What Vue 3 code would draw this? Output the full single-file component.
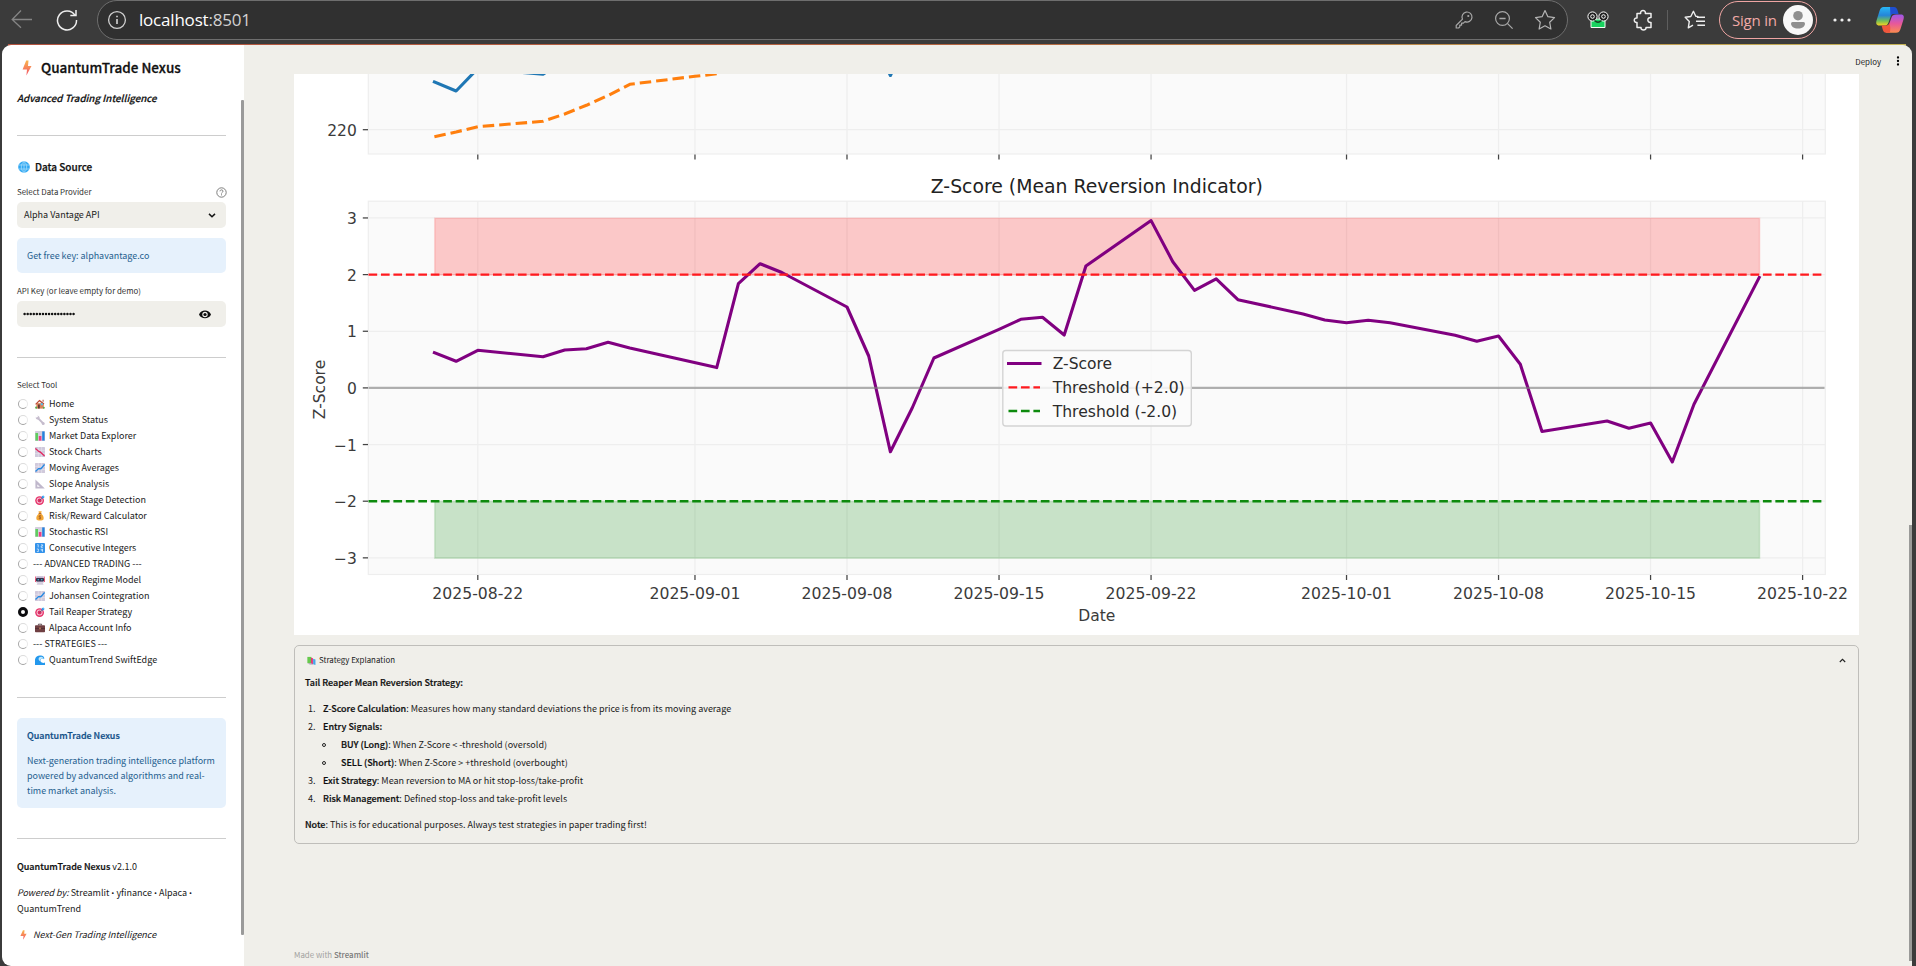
<script setup>
const tools = [
  { icon: 'house', label: 'Home' },
  { icon: 'wrench', label: 'System Status' },
  { icon: 'bars', label: 'Market Data Explorer' },
  { icon: 'down', label: 'Stock Charts' },
  { icon: 'up', label: 'Moving Averages' },
  { icon: 'ruler', label: 'Slope Analysis' },
  { icon: 'target', label: 'Market Stage Detection' },
  { icon: 'money', label: 'Risk/Reward Calculator' },
  { icon: 'bars', label: 'Stochastic RSI' },
  { icon: 'numbers', label: 'Consecutive Integers' },
  { label: '--- ADVANCED TRADING ---' },
  { icon: 'robot', label: 'Markov Regime Model' },
  { icon: 'up', label: 'Johansen Cointegration' },
  { icon: 'target', label: 'Tail Reaper Strategy', on: true },
  { icon: 'case', label: 'Alpaca Account Info' },
  { label: '--- STRATEGIES ---' },
  { icon: 'wave', label: 'QuantumTrend SwiftEdge' }
]

// Horizontal scale: day 0 is 2025-08-22.
const x = d => 477.8 + d * 21.718
const y = z => 387.9 - z * 56.65

const dates = [
  [0, '2025-08-22'], [10, '2025-09-01'], [17, '2025-09-08'], [24, '2025-09-15'],
  [31, '2025-09-22'], [40, '2025-10-01'], [47, '2025-10-08'], [54, '2025-10-15'], [61, '2025-10-22']
]
const levels = [3, 2, 1, 0, -1, -2, -3]

const series = [
  [-2, 352.7], [-1, 361.3], [0, 350.3], [3, 356.7], [4, 350], [5, 348.7], [6, 342.3], [7, 348],
  [11, 367.6], [12, 283.7], [13, 263.7], [14, 272.5], [17, 307], [18, 356], [19, 451.8], [20, 408],
  [21, 358], [24, 329.3], [25, 319.3], [26, 317.3], [27, 335], [28, 266], [31, 220.6], [32, 261.7],
  [33, 290.4], [34, 278.9], [35, 299.7], [38, 314], [39, 320], [40, 322.7], [41, 320.3], [42, 322.7],
  [45, 335.3], [46, 341.3], [47, 336], [48, 364.3], [49, 431.5], [52, 421], [53, 428.3], [54, 423],
  [55, 462], [56, 404.3], [59, 277.5]
]
const price = [[-2, 82], [-1, 91], [0, 68.5], [3, 74.3], [4, 60]]
const dip = [[18, 30], [19, 75.5], [20, 30]]
const average = [
  [-2, 136.7], [-1, 132], [0, 126.7], [3, 121.3], [4, 114], [5, 105.3], [6, 95.5], [7, 84.3],
  [10, 76.3], [11, 73.8], [12, 68]
]
const line = pts => pts.map(([d, v]) => `${x(d).toFixed(1)},${v}`).join(' ')
const bandX = x(-2)
const bandW = x(59) - x(-2)
const fmt = n => (n < 0 ? '\u2212' + -n : String(n))
</script>

<template>
  <div class="browser">
    <svg class="defs" width="0" height="0">
      <linearGradient id="boltg" x1="0" y1="0" x2="0" y2="1"><stop offset="0" stop-color="#f9b64b" /><stop offset="1" stop-color="#f4516a" /></linearGradient>
      <symbol id="bolt" viewBox="0 0 10 16"><path fill="url(#boltg)" d="M4.2.5H6.5L6 6H9.5L4.4 15.5 5 9.5H.6z" /></symbol>
      <symbol id="globe" viewBox="0 0 12 12"><circle cx="6" cy="6" r="5.8" fill="#2fa7f2" /><path d="M.8 4h10.4M.8 8h10.4M6 0v12M6 .4C2.4 3 2.4 9 6 11.6M6 .4C9.6 3 9.6 9 6 11.6" fill="none" stroke="#a5dcfb" stroke-width=".8" /></symbol>
      <symbol id="house" viewBox="0 0 10 10"><path d="M1.4 4.2h7.4V9.6H1.4z" fill="#d98258" /><path d="M.2 5 4.4.8l5 3.8-.8.9-4.2-3-3.4 3.3z" fill="#bd4a35" /><path d="M5.8 4.2h2v2h-2z" fill="#4cc3f5" /><path d="M3 5.6h1.8v4H3z" fill="#633a36" /><path d="M7.6.8h1v2h-1z" fill="#a84936" /><circle cx="1.2" cy="8.7" r="1.1" fill="#56a84b" /><circle cx="8.8" cy="8.8" r="1" fill="#56a84b" /></symbol>
      <symbol id="wrench" viewBox="0 0 10 10"><path d="M2.8 3 7.8 8" stroke="#c5bccd" stroke-width="1.8" stroke-linecap="round" /><path d="M.8 1.8 2.3 3.2 3.4 2 2.2.7C3.6.3 5.2 1.8 4.5 3.6 3.6 5 1.6 4.7.9 3.5z" fill="#c5bccd" /><circle cx="8.2" cy="8.4" r="1.5" fill="#c5bccd" /></symbol>
      <symbol id="bars" viewBox="0 0 10 10"><rect width="10" height="10" rx=".6" fill="#d5cede" /><path d="M.4 2h2.6v7.6H.4z" fill="#5fce5e" /><path d="M3.8 5h2.6v4.6H3.8z" fill="#ed3d85" /><path d="M7.2.4h2.4v9.2H7.2z" fill="#2382de" /></symbol>
      <symbol id="down" viewBox="0 0 10 10"><rect width="10" height="10" rx=".6" fill="#cfc8db" /><path d="M0 3.3h10M0 6.6h10M3.3 0v10M6.6 0v10" stroke="#e9e4ef" stroke-width=".6" /><path d="m.4 1.4 3.4 3 1.6.8L9.6 9" fill="none" stroke="#e12b62" stroke-width="1.4" /></symbol>
      <symbol id="up" viewBox="0 0 10 10"><rect width="10" height="10" rx=".6" fill="#d0c9db" /><path d="M0 3.3h10M0 6.6h10M3.3 0v10M6.6 0v10" stroke="#eae5f0" stroke-width=".6" /><path d="m.5 8.6 3-3 2.4.2L9.6 1.4" fill="none" stroke="#268ae3" stroke-width="1.4" /></symbol>
      <symbol id="ruler" viewBox="0 0 10 10"><path fill-rule="evenodd" d="M.4.6 9.8 9.6H.4zM2.3 5.4v2.4h2.6z" fill="#c0b8cc" /></symbol>
      <symbol id="target" viewBox="0 0 10 10"><circle cx="4.6" cy="5.6" r="4.4" fill="#e6336a" /><circle cx="4.6" cy="5.6" r="3" fill="#f6c4d4" /><circle cx="4.6" cy="5.6" r="2" fill="#df2d66" /><path d="m4.6 5.6 3-3" stroke="#565a68" stroke-width=".8" /><path d="M6.600 3.400 6.800 1.600 8.400.2l.2 1.300 1.300.3L8.400 3.300z" fill="#279cee" /></symbol>
      <symbol id="money" viewBox="0 0 10 10"><path d="M3.5.2h3.2L6 2.6C8 4 9 6 8.6 8.2 8.2 10 1.8 10 1.4 8.2 1 6 2 4 4 2.6z" fill="#f3a736" /><path d="M3.600 2.200h2.800v.8H3.600z" fill="#a75d32" /><path d="M6.200 4.900c-2-.9-3 .8-1.200 1.300 1.800.5.6 2.100-1.200 1.200M5 4.300v4" fill="none" stroke="#965423" stroke-width=".7" /></symbol>
      <symbol id="numbers" viewBox="0 0 10 10"><rect width="10" height="10" rx="1" fill="#3493eb" /><path d="M2.400 1.600h.8v2.800M6 1.800h1.600v1.200H6.200v1.400h1.600M1.800 6h1.600v2.600H1.800M6.200 5.800v1.400h1.600M7.500 5.800v3" fill="none" stroke="#e7f4ff" stroke-width=".7" /></symbol>
      <symbol id="robot" viewBox="0 0 10 10"><path d="M.2.8 1.2 2.600V7H0zM9.800.8 8.800 2.600V7H10z" fill="#ee5678" /><path d="M1.300 1.200h7.400v6.400H1.300z" fill="#c4b8d2" /><rect x=".8" y="3" width="8.4" height="3.400" rx="1.400" fill="#35344d" /><path d="M2.600 4.200h1.400v1H2.600zM6 4.200h1.400v1H6z" fill="#53c8f4" /><path d="M2.600 7.400h5l1 2.400H1.600z" fill="#d6cede" /></symbol>
      <symbol id="case" viewBox="0 0 10 10"><path d="M3.400 2.400V1.200h3.200v1.200" fill="none" stroke="#422c33" stroke-width=".8" /><rect y="2.200" width="10" height="7" rx=".8" fill="#6f3f42" /><path d="M0 5h10v.7H0z" fill="#4c292e" /><path d="M4.300 4.600h1.400v1.600H4.300z" fill="#c98c62" /></symbol>
      <symbol id="wave" viewBox="0 0 10 10"><path d="M0 10V4.400C.6 1 4-.4 7.200.8 9 1.500 9.600 3 9 4.200 7 2.600 4.600 4.400 5.600 6.600 6.400 8 8.600 8.200 10 7.600V10z" fill="#2398ed" /><path d="M4 2.400C6 .8 9 2 8.600 4 6.800 2.800 4.800 4 5 6 3.600 5.400 3.200 3.800 4 2.400z" fill="#bfe7fb" /></symbol>
      <symbol id="books" viewBox="0 0 10 10"><path d="M.4 1h4.400v7H.4z" fill="#66c94c" /><path d="m4.400 1.600 2.200.8v6.800l-2.200-1z" fill="#e53778" /><path d="m6.800 3 2.600.8V10l-2.600-.8z" fill="#45a7e8" /><path d="M1 8h4l2 1.400H3z" fill="#a998b5" /></symbol>
      <linearGradient id="cpa" x1="0" y1="0" x2="0" y2="1"><stop offset="0" stop-color="#28b7f6" /><stop offset=".45" stop-color="#2585d8" /><stop offset=".75" stop-color="#72bd57" /><stop offset="1" stop-color="#f6d320" /></linearGradient>
      <linearGradient id="cpb" x1="0" y1="0" x2="0" y2="1"><stop offset="0" stop-color="#9d57ea" /><stop offset=".5" stop-color="#e7589b" /><stop offset="1" stop-color="#fb8b4f" /></linearGradient>
    </svg>

    <header class="toolbar">
      <svg class="back" width="22" height="20" viewBox="0 0 22 20"><path d="M21 10.500H1.500M10 1.500 1.200 10.500 10 18.800" fill="none" stroke="#858585" stroke-width="1.300" /></svg>
      <svg class="reload" width="22" height="22" viewBox="0 0 22 22"><path d="M19 6.300A9.500 9.500 0 1 0 20.500 11M20 1v5.600h-5.700" fill="none" stroke="#eee" stroke-width="1.500" /></svg>
      <div class="address">
        <svg width="20" height="20" viewBox="0 0 20 20"><circle cx="10" cy="10" r="8.400" fill="none" stroke="#d0d0d0" stroke-width="1.300" /><path d="M10 9v5M10 5.800v1.400" stroke="#e0e0e0" stroke-width="1.500" /></svg>
        <span class="url">localhost<i>:8501</i></span>
        <span class="tools-right">
          <svg width="20" height="20" viewBox="0 0 20 20"><path d="M8.500 9.200A5 5 0 1 1 11 11.600L9.400 13.200H7.600v1.900H5.800v1.700L4.600 18H2.200v-2.500z" fill="none" stroke="#a8a8a8" stroke-width="1.200" stroke-linejoin="round" /><circle cx="14.300" cy="6" r="1.100" fill="#a8a8a8" /></svg>
          <svg width="20" height="20" viewBox="0 0 20 20"><circle cx="8.500" cy="8.500" r="6.900" fill="none" stroke="#a8a8a8" stroke-width="1.200" /><path d="M5.400 8.500h6.200M13.600 13.600l5 5" stroke="#a8a8a8" stroke-width="1.300" /></svg>
          <svg width="22" height="22" viewBox="0 0 22 22"><path d="m11 1.600 2.900 6.100 6.600.9-4.800 4.700 1.200 6.700-5.900-3.200-5.900 3.200 1.200-6.700L1.500 8.600l6.600-.9z" fill="none" stroke="#b5b5b5" stroke-width="1.200" stroke-linejoin="round" /></svg>
        </span>
      </div>
      <svg class="frog" width="22" height="18" viewBox="0 0 22 18"><path d="M4 8h14v8.500H4z" fill="#18d35f" stroke="#f3fff5" stroke-width="1" /><circle cx="5.500" cy="5.500" r="4.600" fill="#222" stroke="#fff" /><circle cx="16.500" cy="5.500" r="4.600" fill="#222" stroke="#fff" /><circle cx="5.500" cy="5.500" r="1.800" fill="none" stroke="#fff" /><circle cx="16.500" cy="5.500" r="1.800" fill="none" stroke="#fff" /><path d="M7.500 9.500q3.500 3.400 7 0" fill="none" stroke="#173c22" stroke-width="1.300" /></svg>
      <svg class="puzzle" width="20" height="22" viewBox="0 0 20 22"><path d="M4 4.500H7.600C7 .5 13 .5 12.400 4.500H18V8.600C13.800 8 13.800 14 18 13.400V18.500H13C13.500 21.800 7.500 21.800 8 18.500H4V13.400C.4 14 .4 8.500 4 9z" fill="none" stroke="#eee" stroke-width="1.500" stroke-linejoin="round" /></svg>
      <span class="sep"></span>
      <svg class="fav" width="22" height="20" viewBox="0 0 22 20"><path d="M14.500 6.600 11.800 6.300 9.400 1.300 6.800 6.500 1.200 7.300 5.300 11.400 4.300 17.800 9 15.200" fill="none" stroke="#eee" stroke-width="1.400" stroke-linejoin="round" /><path d="M13 7.200h8M12 11.200h9M13.400 15.200H21" stroke="#eee" stroke-width="1.400" /></svg>
      <div class="signin"><span>Sign in</span>
        <svg width="30" height="30" viewBox="0 0 30 30"><circle cx="15" cy="15" r="15" fill="#f8f8f8" /><circle cx="15" cy="10.700" r="4.800" fill="#8f8f8f" /><path d="M8 18.500q0-1.500 1.500-1.500h11q1.500 0 1.500 1.500c0 3-3 5-7 5s-7-2-7-5z" fill="#8f8f8f" /></svg>
      </div>
      <svg class="more" width="18" height="4" viewBox="0 0 18 4"><circle cx="2" cy="2" r="1.600" fill="#eee" /><circle cx="9" cy="2" r="1.600" fill="#eee" /><circle cx="16" cy="2" r="1.600" fill="#eee" /></svg>
      <svg class="copilot" width="30" height="28" viewBox="0 0 30 28"><path d="M8.500 1h10.500L13.500 16.500C12.500 19 11.500 19.500 9 19.500H4.500C1 19.500.7 17 1.700 14L4.500 5C5.500 2 6.500 1 8.500 1z" fill="url(#cpa)" /><path d="M15 1h4c2 0 3 1.500 3.800 4l.8 3H19c-2 0-3 .5-3.500 2.500z" fill="#1f4fd0" /><path d="M21.500 8.500H26c3 0 3.300 2.500 2.400 5.200L25.500 23c-1 3-2 3.700-4.500 3.700H11L16.500 11.500c.8-2.300 2-3 5-3z" fill="url(#cpb)" /><path d="M15 26.700H11c-1.800 0-2.800-1.500-3.500-4l-.9-3.200H11c2 0 2.800-.8 3.500-2.700l.8 5z" fill="#f0563c" /></svg>
    </header>

    <div class="page">
      <aside class="sidebar">
        <h1><svg width="10" height="16"><use href="#bolt" /></svg><span>QuantumTrade Nexus</span></h1>
        <p class="tagline">Advanced Trading Intelligence</p>
        <hr>
        <h2><svg width="12" height="12"><use href="#globe" /></svg><span>Data Source</span></h2>
        <div class="label"><span>Select Data Provider</span>
          <svg width="11" height="11" viewBox="0 0 11 11"><circle cx="5.500" cy="5.500" r="4.700" fill="none" stroke="#70716f" stroke-width=".9" /><path d="M4 4.300C4 2.400 7 2.500 7 4.200c0 1.100-1.500 1.200-1.500 2.300M5.500 7.300v1.100" fill="none" stroke="#70716f" stroke-width=".9" /></svg>
        </div>
        <div class="field"><span>Alpha Vantage API</span><svg width="8" height="5" viewBox="0 0 8 5"><path d="m1 .9 3 2.900 3-2.900" fill="none" stroke="#151515" stroke-width="1.500" /></svg></div>
        <div class="info small">Get free key: alphavantage.co</div>
        <div class="label key"><span>API Key (or leave empty for demo)</span></div>
        <div class="field pass"><svg width="54" height="4" viewBox="0 0 54 4"><path d="M1.600 2H51.500" stroke="#111" stroke-width="2.500" stroke-linecap="round" stroke-dasharray="0 3.060" /></svg><svg width="12" height="9" viewBox="0 0 12 9"><path fill-rule="evenodd" d="M0 4.500C2-.8 10-.8 12 4.500 10 9.500 2 9.500 0 4.500zM6 1.800a2.700 2.700 0 1 0 0 5.400 2.700 2.700 0 0 0 0-5.400z" fill="#0d0d0d" /><circle cx="6" cy="4.500" r="1.600" fill="#0d0d0d" /></svg></div>
        <hr class="after-key">
        <div class="label tool"><span>Select Tool</span></div>
        <ul class="radios">
          <li v-for="(t, i) in tools" :key="i">
            <span class="radio" :class="{ on: t.on }"></span>
            <svg v-if="t.icon" width="10" height="10"><use :href="'#' + t.icon" /></svg>
            <span class="name" :class="{ group: !t.icon }">{{ t.label }}</span>
          </li>
        </ul>
        <hr class="after-tools">
        <div class="info about"><b>QuantumTrade Nexus</b><p>Next-generation trading intelligence platform<br>powered by advanced algorithms and real-<br>time market analysis.</p></div>
        <hr class="after-about">
        <p class="ver"><b>QuantumTrade Nexus</b> v2.1.0</p>
        <p class="powered"><em>Powered by:</em> Streamlit <s>•</s> yfinance <s>•</s> Alpaca <s>•</s><br>QuantumTrend</p>
        <p class="next"><svg width="7" height="10" viewBox="0 0 10 16" preserveAspectRatio="none"><use href="#bolt" /></svg><em>Next-Gen Trading Intelligence</em></p>
        <span class="scroll"></span>
      </aside>

      <main class="main">
        <div class="appbar"><span>Deploy</span><svg width="4" height="10" viewBox="0 0 4 10"><circle cx="2" cy="1.500" r="1.150" /><circle cx="2" cy="5" r="1.150" /><circle cx="2" cy="8.500" r="1.150" /></svg></div>

        <svg class="chart" width="1565" height="561" viewBox="294 74 1565 561">
          <rect x="294" y="74" width="1565" height="561" fill="#fff" />
          <g fill="#fafafa" stroke="#eeeeee" stroke-width="1.200">
            <rect x="368.300" y="60" width="1457" height="94" /><rect x="368.300" y="201.200" width="1457" height="373.300" />
          </g>
          <g stroke="#eeeeee" stroke-width="1.250">
            <template v-for="d in dates" :key="d[1]">
              <path :d="`M${x(d[0])} 74V154M${x(d[0])} 201V574.500`" />
            </template>
            <path d="M368 129.700H1825" />
            <path v-for="l in levels" :key="l" :d="`M368 ${y(l)}H1825`" />
          </g>
          <g fill-opacity=".2" stroke-opacity=".13" stroke-width="1.600">
            <rect :x="bandX + .4" :y="y(3) + .3" :width="bandW" height="56.700" fill="red" stroke="red" />
            <rect :x="bandX + .4" :y="y(-2) + .3" :width="bandW" height="56.700" fill="green" stroke="green" />
          </g>
          <g stroke="#444" stroke-width="1.250">
            <template v-for="d in dates" :key="d[1]">
              <path :d="`M${x(d[0])} 154.500V159.500M${x(d[0])} 575V580`" />
            </template>
            <path d="M362.800 129.700H368" />
            <path v-for="l in levels" :key="l" :d="`M362.800 ${y(l)}H368`" />
          </g>
          <g fill="none" stroke-width="3.100" stroke-linejoin="round">
            <polyline :points="line(price)" stroke="#1f77b4" stroke-linecap="square" />
            <polyline :points="line(dip)" stroke="#1f77b4" />
            <polyline :points="line(average)" stroke="#ff7f0e" stroke-dasharray="11.500 5" />
            <polyline :points="line(series)" stroke="#800080" stroke-linecap="square" />
          </g>
          <path :d="`M368.500 ${y(0)}H1824.500`" stroke="#808080" stroke-opacity=".6" stroke-width="2.300" />
          <g stroke-width="2.350" stroke-dasharray="8.690 3.760">
            <path :d="`M368.500 ${y(2)}H1824.500`" stroke="#ff1a1f" /><path :d="`M368.500 ${y(-2)}H1824.500`" stroke="#0d8a0d" />
          </g>
          <g class="tick" text-anchor="middle">
            <text v-for="d in dates" :key="d[1]" :x="x(d[0])" y="599" textLength="91" lengthAdjust="spacingAndGlyphs">{{ d[1] }}</text>
            <text x="1096.800" y="621">Date</text>
            <text transform="translate(324.700 389.500) rotate(-90)">Z-Score</text>
          </g>
          <g class="tick" text-anchor="end">
            <text x="356.800" y="136.300">220</text>
            <text v-for="l in levels" :key="l" x="356.800" :y="y(l) + 6.200">{{ fmt(l) }}</text>
          </g>
          <text class="title" x="1096.800" y="192.500" text-anchor="middle" textLength="332" lengthAdjust="spacingAndGlyphs">Z-Score (Mean Reversion Indicator)</text>
          <rect x="1002.800" y="350.500" width="188.500" height="75.500" rx="3" fill="#fafafa" fill-opacity=".85" stroke="#d4d4d4" stroke-width="1.400" />
          <path d="M1007 363.500H1041.500" stroke="#800080" stroke-width="3.100" />
          <g stroke-width="2.350" stroke-dasharray="8.690 3.760"><path d="M1008.500 387.300H1040" stroke="#ff1a1f" /><path d="M1008.500 411H1040" stroke="#0d8a0d" /></g>
          <g class="tick legend"><text x="1052.700" y="369.300">Z-Score</text><text x="1052.700" y="393.200" textLength="132" lengthAdjust="spacingAndGlyphs">Threshold (+2.0)</text><text x="1052.700" y="417" textLength="124.500" lengthAdjust="spacingAndGlyphs">Threshold (-2.0)</text></g>
        </svg>

        <section class="expander">
          <div class="summary"><svg width="9" height="9" viewBox="0 0 10 10"><use href="#books" /></svg><span>Strategy Explanation</span><svg class="chev" width="7" height="5" viewBox="0 0 7 5"><path d="m.8 4 2.700-2.700L6.200 4" fill="none" stroke="#222" stroke-width="1.100" /></svg></div>
          <p class="lead"><b>Tail Reaper Mean Reversion Strategy:</b></p>
          <div class="list">
            <p><i>1.</i><b>Z-Score Calculation</b>: Measures how many standard deviations the price is from its moving average</p>
            <p><i>2.</i><b>Entry Signals:</b></p>
            <p class="sub"><u></u><b>BUY (Long)</b>: When Z-Score &lt; -threshold (oversold)</p>
            <p class="sub"><u></u><b>SELL (Short)</b>: When Z-Score &gt; +threshold (overbought)</p>
            <p><i>3.</i><b>Exit Strategy</b>: Mean reversion to MA or hit stop-loss/take-profit</p>
            <p><i>4.</i><b>Risk Management</b>: Defined stop-loss and take-profit levels</p>
          </div>
          <p class="note"><b>Note</b>: This is for educational purposes. Always test strategies in paper trading first!</p>
        </section>
        <footer>Made with <b>Streamlit</b></footer>
        <span class="scroll"></span>
      </main>
    </div>
  </div>
</template>

<style>
html, body { margin: 0; background: #3b3b3b; overflow: hidden; }
</style>

<style scoped>
.browser { width: 1916px; height: 966px; overflow: hidden; background: #3b3b3b; font-family: "Noto Sans CJK SC", "Noto Sans", sans-serif; color: #1a1a1a; position: relative; }
.defs { position: absolute; }
svg { display: block; flex: none; }
p, h1, h2, ul { margin: 0; padding: 0; }
b { font-weight: 500; color: #0e0e0e; -webkit-text-stroke: .2px currentColor; }

.toolbar { height: 44px; display: flex; align-items: flex-start; font-family: "Open Sans", "Noto Sans", sans-serif; }
.back { margin: 9px 0 0 11px; }
.reload { margin: 9px 0 0 23px; }
.address { box-sizing: border-box; width: 1471px; height: 40px; margin-left: 19px; border: 1px solid #6e6e6e; border-radius: 20px; background: #303030; display: flex; align-items: center; padding: 0 11px 0 9px; }
.url { margin-left: 12px; font-size: 17px; line-height: 20px; color: #fff; letter-spacing: -.2px; }
.url i { font-style: normal; color: #d2d2d2; }
.tools-right { margin-left: auto; display: flex; align-items: center; gap: 20px; }
.frog { margin: 11px 0 0 19px; }
.puzzle { margin: 9px 0 0 24px; }
.sep { width: 1px; height: 20px; margin: 10px 0 0 14px; background: #5e5e5e; }
.fav { margin: 10px 0 0 16px; }
.signin { box-sizing: border-box; width: 98px; height: 38px; margin: 1px 0 0 13px; border: 1px solid #efa5a3; border-radius: 19px; display: flex; align-items: center; justify-content: space-between; padding: 0 3px 0 12px; color: #f1aaa7; font-size: 15px; letter-spacing: -.2px; }
.signin span { padding-bottom: 1px; }
.more { margin: 18px 0 0 16px; }
.copilot { margin: 6px 0 0 24px; }

.page { height: 922px; width: 1912px; box-sizing: border-box; padding-left: 2px; display: flex; position: relative; }
.page::before { content: ""; position: absolute; left: 8px; right: 6px; top: 0; height: 2px; background: linear-gradient(90deg, #b3533f, #b3633f 50%, #c4b255); }
.sidebar { position: relative; box-sizing: border-box; width: 242px; height: 921px; margin-top: 1px; background: #fff; border-radius: 9px 0 0 9px; padding: 0 18px 0 15px; font-size: 9px; line-height: 16px; }
.sidebar hr { border: 0; height: 1px; background: #cdcdcd; margin: 0; }
h1 { display: flex; align-items: center; height: 20px; padding: 13px 0 0 5px; gap: 9px; font-size: 13.500px; font-weight: 500; line-height: 20px; color: #111; -webkit-text-stroke: .3px #111; white-space: nowrap; }
h1 span { padding-bottom: 2px; }
.tagline { height: 16px; margin-top: 12px; font-style: italic; font-weight: 500; font-size: 9.750px; color: #111; -webkit-text-stroke: .2px #111; white-space: nowrap; }
.sidebar .tagline + hr { margin-top: 29px; }
h2 { display: flex; align-items: center; gap: 5px; padding-left: 1px; height: 16px; margin-top: 23px; font-size: 10px; font-weight: 500; color: #111; -webkit-text-stroke: .25px #111; }
.label { height: 12px; line-height: 12px; margin-top: 11px; display: flex; align-items: center; justify-content: space-between; font-size: 7.900px; color: #303030; white-space: nowrap; }
.label span { padding-bottom: 1px; }
.label svg { margin-right: -1px; }
.field { box-sizing: border-box; height: 26px; margin-top: 4px; padding: 0 10px 0 7px; background: #f0efea; border-radius: 5px; display: flex; align-items: center; justify-content: space-between; }
.field span { padding-bottom: 1px; }
.info { background: #e6f1fc; border-radius: 5px; color: #25608f; padding: 0 10px; font-size: 8.960px; white-space: nowrap; }
.info b { color: #104f87; display: block; }
.info.small { height: 35px; line-height: 35px; margin-top: 10px; }
.label.key { margin-top: 12px; }
.pass { padding: 0 15px 0 6px; }
.sidebar .after-key { margin-top: 30px; }
.label.tool { margin-top: 21px; }
.radios { list-style: none; margin-top: 5px; }
.radios li { height: 16px; display: flex; align-items: center; }
.radio { box-sizing: border-box; width: 10px; height: 10px; margin: 0 7px 0 1px; border-radius: 50%; border: 1px solid #e9e9e9; border-left-color: #a7a7a7; border-bottom-color: #a0a0a0; border-top-color: #dcdcdc; }
.radio.on { border: 3px solid #0c0c0f; }
.name { margin-left: 4px; padding-bottom: 1px; white-space: nowrap; }
.name.group { margin-left: -2px; }
.sidebar .after-tools { margin-top: 29px; }
.about { box-sizing: border-box; height: 90px; margin-top: 20px; padding-top: 10px; line-height: 15px; }
.about p { margin-top: 10px; }
.sidebar .after-about { margin-top: 30px; }
.ver { margin-top: 20px; }
.powered { margin-top: 10px; white-space: nowrap; }
.powered s { text-decoration: none; font-family: "Open Sans", sans-serif; font-size: 8px; line-height: 1; }
.next { margin-top: 10px; padding-left: 3px; display: flex; align-items: center; gap: 6px; }
.sidebar .scroll { position: absolute; right: 0; top: 55px; width: 3px; height: 835px; background: #9a9a9a; border-radius: 1px; }

.main { position: relative; flex: 1; height: 921px; margin-top: 1px; background: #f0efea; border-radius: 0 9px 0 0; box-sizing: border-box; padding: 0 53px 0 50px; }
.appbar { height: 29px; margin-right: -41px; display: flex; justify-content: flex-end; align-items: center; gap: 15px; font-size: 7.900px; box-sizing: border-box; padding-top: 3px; }
.chart { display: block; }
.tick { font-family: "DejaVu Sans", sans-serif; font-size: 15.500px; fill: #3b3b3b; }
.legend { fill: #2c2c2c; }
.title { font-family: "DejaVu Sans", sans-serif; font-size: 18.600px; fill: #222; }
.expander { box-sizing: border-box; width: 1565px; height: 199px; margin-top: 10px; border: 1px solid #bfbeba; border-radius: 5px; padding: 0 10px; font-size: 9px; line-height: 18px; white-space: nowrap; }
.summary { height: 28px; display: flex; align-items: center; gap: 3px; padding-left: 2px; font-size: 7.900px; }
.chev { margin-left: auto; margin-right: 2px; }
.list { margin-top: 8px; }
.list p { height: 18px; }
.list i { font-style: normal; display: inline-block; width: 15px; margin-left: 3px; }
.list .sub { padding-left: 17px; }
.list u { display: inline-block; box-sizing: border-box; width: 4px; height: 4px; border: 1px solid #222; border-radius: 50%; margin: 0 15px 1px 0; }
.note { margin-top: 8px; }
footer { margin-top: 103px; height: 16px; line-height: 16px; font-size: 7.900px; color: #a2a2a0; }
footer b { color: #777; -webkit-text-stroke: 0; }
.main .scroll { position: absolute; right: 0; top: 480px; width: 3px; height: 436px; background: #9a9a98; }
</style>
